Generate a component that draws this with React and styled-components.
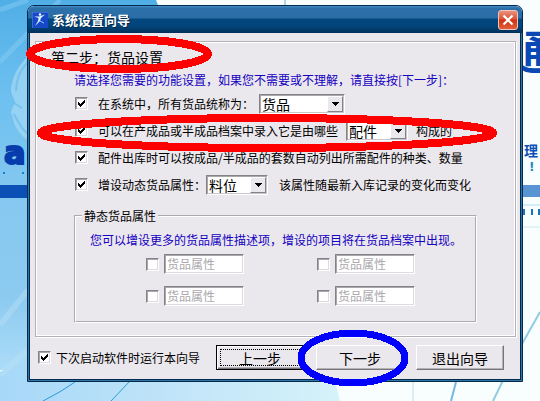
import React, { useState } from "react";
import styled, { createGlobalStyle } from "styled-components";

const GlobalStyle = createGlobalStyle`
  * {
    box-sizing: border-box;
  }

  body {
    margin: 0;
    font-family: "Noto Sans CJK SC", sans-serif;
    font-size: 12px;
    line-height: 20px;
    color: #000;
  }
`

const Desktop = styled.main`
  position: relative;
  min-height: 100vh;
  padding: 5px 17px 19px 27px;
  overflow: hidden;
  background: #f8fdfd;
`

const Wallpaper = styled.svg`
  position: absolute;
  inset: 0;
  width: 100%;
  height: 100%;
`

const BannerText = styled.span`
  position: absolute;
  left: ${({$x}) => $x}px;
  top: ${({$y}) => $y}px;
  color: ${({$color}) => $color || "#0b50b4"};
  font-size: ${({$size}) => $size}px;
  line-height: 1;
  font-weight: 700;
  white-space: nowrap;
`

const LatinBannerText = styled(BannerText)`
  font-family: "DejaVu Sans", sans-serif;
  -webkit-text-stroke: ${({$stroke}) => $stroke || 0}px currentColor;
`

const Dialog = styled.section`
  position: relative;
  border: 1px solid #012a4c;
  border-radius: 7px 7px 0 0;
  background: #ebe8ed;
  overflow: hidden;
`

const TitleBar = styled.header`
  display: flex;
  align-items: center;
  gap: 4px;
  height: 27px;
  padding: 0 4px;
  background: linear-gradient(#4a8fc4 0, #2c70aa 2px, #2b6da6 12px, #034780 13px, #02457c 20px, #013058 27px);
`

const Caption = styled.h1`
  flex: 1;
  margin: 0;
  font-size: 13px;
  line-height: 20px;
  font-weight: 700;
  color: #fff;
  text-shadow: 1px 1px 0 #012848;
`

const CloseButton = styled.button`
  display: flex;
  align-items: center;
  justify-content: center;
  width: 20px;
  height: 20px;
  padding: 0;
  border: 1px solid #f5c4b8;
  border-radius: 3px;
  background: linear-gradient(#e8907c, #dc5536 45%, #cf3310 50%, #e0603c);
`

const Body = styled.form`
  padding: 8px 5px 0 6px;
  border: solid #2f75a8;
  border-width: 0 1px 1px;
  box-shadow: inset 1px 0 0 #012a4c, inset -1px -1px 0 #012a4c;
`

const Panel = styled.div`
  padding: 2px 38px 13px;
  border: 1px solid #b3b1b5;
  outline: 1px solid #fff;
  outline-offset: -2px;
  box-shadow: 1px 1px 0 #fff;
`

const StepTitle = styled.h2`
  margin: 0 0 0 -23px;
  font-size: 14px;
  line-height: 26px;
  font-weight: 400;
`

const Tip = styled.p`
  margin: 0;
  line-height: 20px;
  color: #1400c0;
  white-space: nowrap;
`

const OptionRow = styled.div`
  display: flex;
  align-items: center;
  gap: ${({$gap}) => $gap || 0}px;
  height: 27px;
  padding-left: 1px;
  white-space: nowrap;
`

const CheckLabel = styled.label`
  display: flex;
  align-items: center;
  gap: ${({$gap}) => $gap}px;
  white-space: nowrap;
`

const CheckBox = styled.input`
  appearance: none;
  flex: none;
  width: 13px;
  height: 13px;
  margin: 0;
  border: 1px solid;
  border-color: #858388 #fff #fff #858388;
  background: #fff;
  box-shadow: inset 1px 1px 0 #a9a7ab, inset -1px -1px 0 #dedbe0;

  &:checked {
    background: #fff url("data:image/svg+xml,%3Csvg xmlns='http://www.w3.org/2000/svg' width='7' height='7' shape-rendering='crispEdges'%3E%3Cpath d='M0 2h1v1h1v1h1V3h1V2h1V1h1V0h1v3H6v1H5v1H4v1H3v1H2V6H1V5H0z'/%3E%3C/svg%3E") center no-repeat;
  }
`

const ComboFrame = styled.span`
  display: flex;
  width: ${({$width}) => $width}px;
  height: 20px;
  border: 1px solid;
  border-color: #858388 #fff #fff #858388;
  background: #fff;
  box-shadow: inset 1px 1px 0 #a9a7ab, inset -1px -1px 0 #c9c6cb;
`

const ComboSelect = styled.select`
  appearance: none;
  flex: 1;
  min-width: 0;
  padding: 0 2px;
  border: 0;
  background: transparent;
  color: #000;
  font: 14px/18px "Noto Sans CJK SC", sans-serif;
`

const ComboArrow = styled.span`
  display: flex;
  align-items: center;
  justify-content: center;
  width: 16px;
  margin: 1px;
  border: 1px solid;
  border-color: #fff #858388 #858388 #fff;
  background: #ebe8ed;
  pointer-events: none;
`

const Group = styled.fieldset`
  min-width: 0;
  margin: 8px 0 0;
  padding: 4px 14px 15px;
  border: 2px groove #fff;
`

const Legend = styled.legend`
  margin-left: -8px;
  padding: 0 2px;
  line-height: 20px;
`

const AttributeGrid = styled.div`
  display: grid;
  grid-template-columns: max-content max-content;
  gap: 12px 73px;
  margin-top: 4px;
  padding-left: 56px;
`

const Attribute = styled.div`
  display: flex;
  align-items: center;
  gap: 5px;
`

const AttributeInput = styled.input`
  width: 80px;
  height: 20px;
  padding: 0 2px 2px;
  border: 1px solid;
  border-color: #858388 #fff #fff #858388;
  background: #fff;
  box-shadow: inset 1px 1px 0 #a9a7ab, inset -1px -1px 0 #dedbe0;
  color: #aaa8ab;
  font: 12px/16px "Noto Sans CJK SC", sans-serif;
`

const Footer = styled.footer`
  display: flex;
  align-items: center;
  justify-content: space-between;
  padding: 8px 12px 10px 3px;
`

const Buttons = styled.div`
  display: flex;
  gap: 12px;
`

const PushButton = styled.button`
  width: 88px;
  height: 25px;
  padding: 0;
  border: 1px solid;
  border-color: ${({$focused}) => $focused ? "#000" : "#fff #77757a #77757a #fff"};
  outline: ${({$focused}) => $focused ? "1px dotted #000" : "none"};
  outline-offset: -5px;
  background: #ebe8ed;
  box-shadow: ${({$focused}) => $focused
    ? "inset 1px 1px 0 #fff, inset -1px -1px 0 #77757a, inset -2px -2px 0 #b3b1b5"
    : "inset -1px -1px 0 #b3b1b5"};
  color: #000;
  font: 14px/20px "Noto Sans CJK SC", sans-serif;
`

const Marks = styled.svg`
  position: absolute;
  top: 0;
  left: 0;
  width: 540px;
  height: 401px;
  pointer-events: none;
`

function Combo({label, value, width}) {
  return <ComboFrame $width={width}>
    <ComboSelect aria-label={label} defaultValue={value}>
      <option>{value}</option>
    </ComboSelect>
    <ComboArrow>
      <svg width="7" height="4" shapeRendering="crispEdges"><path d="M0 0h7v1H6v1H5v1H4v1H3V3H2V2H1V1H0z" /></svg>
    </ComboArrow>
  </ComboFrame>
}

function Check({gap = 10, text, defaultChecked = true}) {
  return <CheckLabel $gap={gap}>
    <CheckBox type="checkbox" defaultChecked={defaultChecked} />
    {text}
  </CheckLabel>
}

function AttributeField({id}) {
  const [enabled, setEnabled] = useState(false);

  return <Attribute>
    <CheckBox
      type="checkbox"
      aria-label={`货品属性 ${id}`}
      checked={enabled}
      onChange={e => setEnabled(e.target.checked)}
    />
    <AttributeInput aria-label={`货品属性 ${id}`} defaultValue="货品属性" disabled={!enabled} />
  </Attribute>
}

function Background() {
  return <>
    <Wallpaper viewBox="0 0 540 401" preserveAspectRatio="xMidYMid slice" aria-hidden="true">
      <defs>
        <linearGradient id="sky" x1="0" y1="0" x2="0" y2="1">
          <stop offset="0" stopColor="#50aee6" />
          <stop offset=".25" stopColor="#6cc0f0" />
          <stop offset=".55" stopColor="#86c8f0" />
          <stop offset=".8" stopColor="#8ccaf0" />
          <stop offset="1" stopColor="#acdcf8" />
        </linearGradient>
        <linearGradient id="floor">
          <stop offset="0" stopColor="#a6d8f8" />
          <stop offset=".5" stopColor="#c0e4f8" />
          <stop offset="1" stopColor="#d6f2fa" />
        </linearGradient>
      </defs>
      <path d="M0 0h156l4 10v360H0z" fill="url(#sky)" />
      <path d="M0 372L60 340h265l15 61H0z" fill="url(#floor)" />
      <path d="M0 10L28 0M0 62L60 0" stroke="#90d2f5" strokeWidth="5" opacity=".4" />
      <path d="M28 56c-10 10-17 22-17 36l4 10-4 10 4 14c4 6 8 12 13 14z" fill="#a5d9f5" opacity=".7" />
      <path d="M28 62c-8 8-12 19-12 29M14 103l8 5M14 114c4 8 8 16 14 20" fill="none" stroke="#66b7e5" strokeWidth="2" opacity=".6" />
      <path d="M0 325L28 290M0 375L28 350" stroke="#bde3f7" strokeWidth="6" opacity=".4" />
      <path d="M0 185h28v13H0z" fill="#0a50b5" />
      <path d="M3 172h2v2H3zM22 172h2v2h-2z" fill="#1582cd" />
      <path d="M285 0v6" stroke="#69aed0" />
      <path d="M43 401q18-9 32-19M111 401l19-20" fill="none" stroke="#2b9bd5" />
      <path d="M413 382v19" stroke="#bddeea" />
      <path d="M451 401l5-19" stroke="#78b5df" strokeWidth="2" />
      <path d="M493 401Q515 355 540 312" fill="none" stroke="#91cce2" strokeWidth="2" />
      <path d="M520 185h20v12h-20z" fill="#5794d3" />
      <path d="M520 205h20" stroke="#d3eef6" strokeWidth="2" />
      <path d="M520 227h20" stroke="#cdebee" />
      <path d="M524 209v6M532 209v6M539 209v6" stroke="#1874bd" strokeWidth="2" />
    </Wallpaper>
    <LatinBannerText $x={4} $y={137} $size={32} $stroke={2} $color="#073cac">a</LatinBannerText>
    <BannerText $x={509} $y={26} $size={46} $color="#0948b5">通</BannerText>
    <BannerText $x={524} $y={143} $size={14}>理</BannerText>
    <LatinBannerText $x={529} $y={161} $size={12} $color="#2687c8">!</LatinBannerText>
  </>
}

export default function App() {
  return <Desktop>
    <GlobalStyle />
    <Background />

    <Dialog>
      <TitleBar>
        <svg width="16" height="16" viewBox="0 0 16 16" aria-hidden="true">
          <path d="M0 0h16v16H0z" fill="#1648c8" />
          <path d="M0 16V0h16" fill="none" stroke="#5f8cec" />
          <path d="M2 4.5h5l6-2-4 3.5-1 3-5 5 3-5 .5-3z" fill="#d9f4ff" />
          <circle cx="8" cy="2.5" r="1.2" fill="#fff" />
          <path d="M8 9l4 2" stroke="#8ccfff" />
        </svg>
        <Caption>系统设置向导</Caption>
        <CloseButton type="button" aria-label="关闭">
          <svg width="12" height="12" viewBox="0 0 12 12"><path d="M1.5 1.5l9 9M10.5 1.5l-9 9" stroke="#fff" strokeWidth="2.2" /></svg>
        </CloseButton>
      </TitleBar>

      <Body onSubmit={e => e.preventDefault()}>
        <Panel>
          <StepTitle>第二步：货品设置</StepTitle>
          <Tip>请选择您需要的功能设置，如果您不需要或不理解，请直接按[下一步]：</Tip>

          <OptionRow $gap={5}>
            <Check text="在系统中，所有货品统称为：" />
            <Combo label="货品统称" value="货品" width={86} />
          </OptionRow>
          <OptionRow $gap={8}>
            <Check text="可以在产成品或半成品档案中录入它是由哪些" />
            <Combo label="组成名称" value="配件" width={62} />
            <span>构成的</span>
          </OptionRow>
          <OptionRow>
            <Check text="配件出库时可以按成品/半成品的套数自动列出所需配件的种类、数量" />
          </OptionRow>
          <OptionRow>
            <Check text="增设动态货品属性：" />
            <Combo label="动态货品属性" value="料位" width={62} />
            <OptionRow $gap={10}>
              <span />
              <span>该属性随最新入库记录的变化而变化</span>
            </OptionRow>
          </OptionRow>

          <Group>
            <Legend>静态货品属性</Legend>
            <Tip>您可以增设更多的货品属性描述项，增设的项目将在货品档案中出现。</Tip>
            <AttributeGrid>
              {[1, 2, 3, 4].map(id => <AttributeField key={id} id={id} />)}
            </AttributeGrid>
          </Group>
        </Panel>

        <Footer>
          <Check gap={5} text="下次启动软件时运行本向导" />
          <Buttons>
            <PushButton type="button" $focused>上一步</PushButton>
            <PushButton type="submit">下一步</PushButton>
            <PushButton type="button">退出向导</PushButton>
          </Buttons>
        </Footer>
      </Body>
    </Dialog>

    <Marks viewBox="0 0 540 401" fill="none" shapeRendering="crispEdges" aria-hidden="true">
      <ellipse cx="119" cy="54" rx="89" ry="15" stroke="#f00" strokeWidth="8" />
      <ellipse cx="267" cy="133" rx="226" ry="15" stroke="#f00" strokeWidth="8" />
      <ellipse cx="353" cy="358" rx="52" ry="25" stroke="#00f" strokeWidth="7" />
    </Marks>
  </Desktop>
}
